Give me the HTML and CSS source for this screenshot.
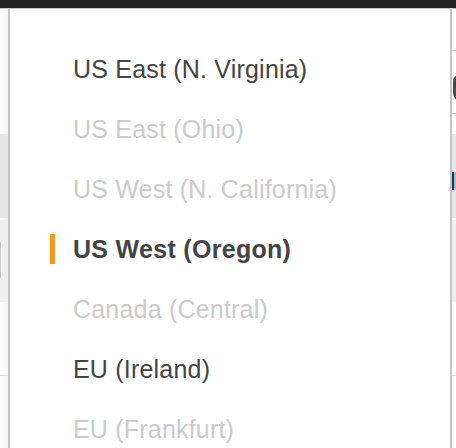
FILE: index.html
```html
<!DOCTYPE html>
<html>
<head>
<meta charset="utf-8">
<link rel="stylesheet" href="styles.css">
</head>
<body>
<div class="topbar"></div>
<div class="main">
  <div class="strip left">
    <div class="sec white h125"></div>
    <div class="sec gray h84"></div>
    <div class="sec white h2"></div>
    <div class="sec light h82"><div class="inputedge"></div></div>
    <div class="sec white h73"></div>
    <div class="sec line"></div>
    <div class="sec white grow"></div>
  </div>
  <div class="panel">
    <ul class="regions">
      <li class="region">US East (N. Virginia)</li>
      <li class="region disabled">US East (Ohio)</li>
      <li class="region disabled">US West (N. California)</li>
      <li class="region selected">US West (Oregon)</li>
      <li class="region disabled">Canada (Central)</li>
      <li class="region">EU (Ireland)</li>
      <li class="region disabled">EU (Frankfurt)</li>
    </ul>
  </div>
  <div class="strip right">
    <div class="sec white h41"></div>
    <div class="sec line"></div>
    <div class="sec white h62"><div class="glyph"></div></div>
    <div class="sec line dark"></div>
    <div class="sec white h20"></div>
    <div class="sec gray h84"><div class="info"></div></div>
    <div class="sec white h2"></div>
    <div class="sec light h82"></div>
    <div class="sec white h73"></div>
    <div class="sec line"></div>
    <div class="sec white grow"></div>
  </div>
</div>
</body>
</html>
```

FILE: styles.css
```css
html, body {
  margin: 0;
  padding: 0;
  width: 456px;
  height: 448px;
  overflow: hidden;
  background: #fff;
  font-family: "Liberation Sans", Arial, Helvetica, sans-serif;
}
.topbar {
  height: 8px;
  background: #232323;
  border-bottom: 1px solid #c8c8c8;
}
.main {
  display: flex;
  height: 439px;
}
.strip {
  display: flex;
  flex-direction: column;
}
.strip.left { width: 8px; }
.strip.right { width: 4px; }
.sec { flex: none; position: relative; }
.sec.white { background: #fff; }
.sec.gray { background: #e6e6e6; }
.sec.light { background: #efefef; }
.sec.line { height: 1px; background: #d8d8d8; }
.sec.line.dark { background: #bdbdbd; }
.sec.grow { flex: 1; }
.h125 { height: 125px; }
.h84 { height: 84px; }
.h2 { height: 2px; }
.h82 { height: 82px; }
.h73 { height: 73px; }
.h41 { height: 41px; }
.h62 { height: 62px; }
.h20 { height: 20px; }
.left .sec.white { background: linear-gradient(to right, #fff, #f4f4f4); }
.inputedge {
  position: absolute;
  left: 0;
  top: 22px;
  width: 1px;
  height: 36px;
  background: #c8c8c8;
  border-right: 1px solid #fff;
}
.glyph {
  position: absolute;
  left: 1px;
  top: 24px;
  width: 8px;
  height: 26px;
  border-radius: 6px 0 0 8px;
  background: #4a4a4a;
}
.info {
  position: absolute;
  left: 0;
  top: 38px;
  width: 2px;
  height: 18px;
  background: #333;
  border-right: 2px solid #8cc4ee;
}
.panel {
  width: 440px;
  background: #fff;
  border-left: 2px solid #c4c4c4;
  border-right: 2px solid #c4c4c4;
}
.regions {
  list-style: none;
  margin: 0;
  padding: 30px 0 0 0;
}
.region {
  position: relative;
  height: 60px;
  line-height: 60px;
  padding-left: 63px;
  font-size: 25px;
  letter-spacing: 0.2px;
  color: #444;
  white-space: nowrap;
}
.region.disabled { color: #cbcbcb; }
.region.selected { font-weight: bold; letter-spacing: 0.3px; }
.region.selected::before {
  content: "";
  position: absolute;
  left: 40px;
  top: 15px;
  width: 5px;
  height: 30px;
  background: #f7981d;
}
```
